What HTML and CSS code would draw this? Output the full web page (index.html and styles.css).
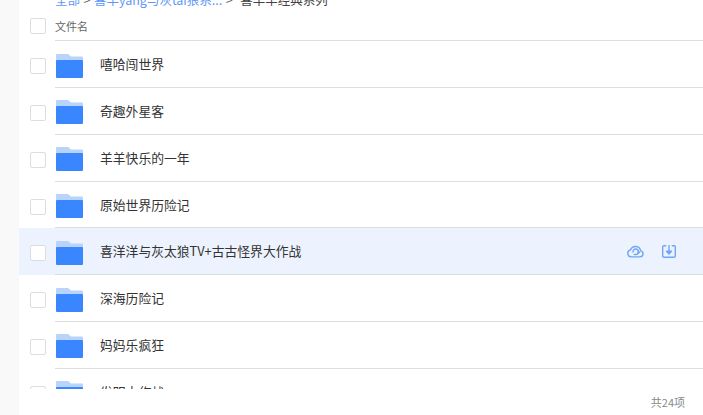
FILE: index.html
```html
<!DOCTYPE html>
<html lang="zh-CN">
<head>
    <meta charset="UTF-8">
    <title>文件列表</title>
    <link rel="stylesheet" href="styles.css">
</head>
<body>

<div class="page">
    <div class="sidebar"></div>

    <div class="main">
        <div class="crumbs">
            <a>全部</a><span class="sep">&gt;</span><a>喜羊yang与灰tai狼系...</a><span class="sep">&gt;</span><span class="current">喜羊羊经典系列</span>
        </div>

        <div class="list-head">
            <span class="check"></span>
            <div class="head-title">文件名</div>
        </div>

        <ul class="file-list">
            <li class="file-row">
                <span class="check"></span>
                <div class="row-body">
                    <svg class="folder" viewBox="0 0 27 24"><path fill="#b9d4fb" d="M1 0H12L15 2.500H26A1 1 0 0 1 27 3.500V8H0V1A1 1 0 0 1 1 0Z"/><rect fill="#3a86ff" y="6" width="27" height="18" rx="1"/></svg>
                    <span class="file-name">嘻哈闯世界</span>
                </div>
            </li>
            <li class="file-row">
                <span class="check"></span>
                <div class="row-body">
                    <svg class="folder" viewBox="0 0 27 24"><path fill="#b9d4fb" d="M1 0H12L15 2.500H26A1 1 0 0 1 27 3.500V8H0V1A1 1 0 0 1 1 0Z"/><rect fill="#3a86ff" y="6" width="27" height="18" rx="1"/></svg>
                    <span class="file-name">奇趣外星客</span>
                </div>
            </li>
            <li class="file-row">
                <span class="check"></span>
                <div class="row-body">
                    <svg class="folder" viewBox="0 0 27 24"><path fill="#b9d4fb" d="M1 0H12L15 2.500H26A1 1 0 0 1 27 3.500V8H0V1A1 1 0 0 1 1 0Z"/><rect fill="#3a86ff" y="6" width="27" height="18" rx="1"/></svg>
                    <span class="file-name">羊羊快乐的一年</span>
                </div>
            </li>
            <li class="file-row">
                <span class="check"></span>
                <div class="row-body">
                    <svg class="folder" viewBox="0 0 27 24"><path fill="#b9d4fb" d="M1 0H12L15 2.500H26A1 1 0 0 1 27 3.500V8H0V1A1 1 0 0 1 1 0Z"/><rect fill="#3a86ff" y="6" width="27" height="18" rx="1"/></svg>
                    <span class="file-name">原始世界历险记</span>
                </div>
            </li>
            <li class="file-row active">
                <span class="check"></span>
                <div class="row-body">
                    <svg class="folder" viewBox="0 0 27 24"><path fill="#b9d4fb" d="M1 0H12L15 2.500H26A1 1 0 0 1 27 3.500V8H0V1A1 1 0 0 1 1 0Z"/><rect fill="#3a86ff" y="6" width="27" height="18" rx="1"/></svg>
                    <span class="file-name">喜洋洋与灰太狼TV+古古怪界大作战</span>
                    <div class="row-actions">
                        <svg class="act-cloud" viewBox="0 0 18 15" fill="none" stroke="#6ea5f8" stroke-width="1.500" stroke-linecap="round" stroke-linejoin="round"><path d="M4.500 13.800H13.800A3.300 3.300 0 0 0 14.600 7.300A5.700 5.700 0 0 0 3.700 6.300A3.800 3.800 0 0 0 4.500 13.800Z"/><path d="M6.300 8.500A3 3 0 1 1 9.300 11.300H7.800"/><path d="M11.600 8.400L12.300 9.600L13.400 8.800"/></svg>
                        <svg class="act-save" viewBox="0 0 15 14" fill="none" stroke="#6ea5f8" stroke-width="1.500" stroke-linecap="round" stroke-linejoin="round"><path d="M4 .800H2A1.300 1.300 0 0 0 .700 2.100V11.900A1.300 1.300 0 0 0 2 13.200H13A1.300 1.300 0 0 0 14.300 11.900V2.100A1.300 1.300 0 0 0 13 .800H11"/><path d="M7.500 .700V8.500"/><path fill="#6ea5f8" d="M4.800 6.800H10.200L7.500 9.600Z"/></svg>
                    </div>
                </div>
            </li>
            <li class="file-row">
                <span class="check"></span>
                <div class="row-body">
                    <svg class="folder" viewBox="0 0 27 24"><path fill="#b9d4fb" d="M1 0H12L15 2.500H26A1 1 0 0 1 27 3.500V8H0V1A1 1 0 0 1 1 0Z"/><rect fill="#3a86ff" y="6" width="27" height="18" rx="1"/></svg>
                    <span class="file-name">深海历险记</span>
                </div>
            </li>
            <li class="file-row">
                <span class="check"></span>
                <div class="row-body">
                    <svg class="folder" viewBox="0 0 27 24"><path fill="#b9d4fb" d="M1 0H12L15 2.500H26A1 1 0 0 1 27 3.500V8H0V1A1 1 0 0 1 1 0Z"/><rect fill="#3a86ff" y="6" width="27" height="18" rx="1"/></svg>
                    <span class="file-name">妈妈乐疯狂</span>
                </div>
            </li>
            <li class="file-row">
                <span class="check"></span>
                <div class="row-body">
                    <svg class="folder" viewBox="0 0 27 24"><path fill="#b9d4fb" d="M1 0H12L15 2.500H26A1 1 0 0 1 27 3.500V8H0V1A1 1 0 0 1 1 0Z"/><rect fill="#3a86ff" y="6" width="27" height="18" rx="1"/></svg>
                    <span class="file-name">发明大作战</span>
                </div>
            </li>
        </ul>

        <div class="list-foot">共24项</div>
    </div>
</div>

</body>
</html>
```

FILE: styles.css
```css
html, body {
    margin: 0;
    padding: 0;
    height: 100%;
    overflow: hidden;
}

body {
    font-family: "Noto Sans CJK SC", "Liberation Sans", sans-serif;
    background-color: white;
    color: #333;
}

.page {
    display: flex;
    height: 415px;
}

.sidebar {
    width: 19px;
    flex-shrink: 0;
    background-color: #f9f9f9;
}

.main {
    flex: 1;
    min-width: 0;
    display: flex;
    flex-direction: column;
}

/* breadcrumb is scrolled half out of the window */
.crumbs {
    height: 8px;
    padding-left: 36px;
    display: flex;
    align-items: flex-end;
    overflow: hidden;
    font-size: 12.5px;
    line-height: 16px;
    white-space: nowrap;
}

.crumbs a {
    color: #5f97f7;
}

.crumbs .sep {
    margin: 0 3.5px;
    color: #666;
}

.crumbs .current {
    margin-left: 4px;
    color: #444;
}

.check {
    width: 16px;
    height: 16px;
    box-sizing: border-box;
    border: 1.5px solid #ddd;
    border-radius: 2px;
    background-color: white;
    flex-shrink: 0;
    margin-left: 11px;
    margin-top: 3px;
}

.list-head {
    height: 33.3px;
    display: flex;
    align-items: center;
}

.head-title {
    flex: 1;
    height: 32.3px;
    margin-left: 9px;
    border-bottom: 1px solid #ddd;
    font-size: 11px;
    line-height: 36px;
    color: #666;
}

.file-list {
    list-style: none;
    margin: 0;
    padding: 0;
    height: 347.7px;
    overflow: hidden;
}

.file-row {
    height: 46.8px;
    display: flex;
    align-items: center;
}

.file-row.active {
    background-color: #edf3fe;
}

.row-body {
    flex: 1;
    min-width: 0;
    height: 45.8px;
    margin-left: 9px;
    display: flex;
    align-items: center;
    border-bottom: 1px solid #ddd;
}

.folder {
    width: 27px;
    height: 24px;
    margin-left: 1px;
    margin-top: 3px;
    flex-shrink: 0;
}

.file-name {
    margin-left: 17px;
    margin-bottom: 1px;
    font-size: 12.8px;
    color: #333;
}

.row-actions {
    margin-left: auto;
    margin-right: 27px;
    display: flex;
    align-items: center;
    gap: 18px;
}

.act-cloud {
    width: 17px;
    height: 14px;
}

.act-save {
    width: 14px;
    height: 13px;
    margin-top: 1px;
}

.list-foot {
    flex: 1;
    padding-right: 18px;
    text-align: right;
    font-size: 11px;
    line-height: 26px;
    color: #888;
}
```
